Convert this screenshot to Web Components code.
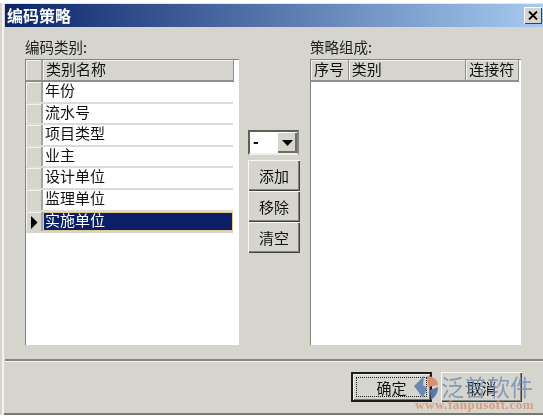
<!DOCTYPE html>
<html lang="zh"><head><meta charset="utf-8">
<style>
html,body{margin:0;padding:0;background:#fff;width:543px;height:418px;overflow:hidden}
body{font-family:"Noto Sans CJK SC","Liberation Sans",sans-serif;color:#111}
</style></head><body>
<win-dialog heading="编码策略">
  <field-panel slot="left" label="编码类别:">
    <data-grid kind="left" columns="类别名称" rows="年份,流水号,项目类型,业主,设计单位,监理单位,实施单位" current="6"></data-grid>
  </field-panel>
  <div slot="middle">
    <win-combo value="-"></win-combo>
    <win-btngroup><win-button>添加</win-button><win-button>移除</win-button><win-button>清空</win-button></win-btngroup>
  </div>
  <field-panel slot="right" label="策略组成:">
    <data-grid kind="right" columns="序号,类别,连接符" rows=""></data-grid>
  </field-panel>
  <win-button slot="footer" size="big" primary>确定</win-button>
  <win-button slot="footer" size="big">取消</win-button>
  <brand-mark slot="mark"></brand-mark>
</win-dialog>
<script>
function def(name,css,html){
  customElements.define(name,class extends HTMLElement{
    connectedCallback(){
      if(this.shadowRoot)return;
      const r=this.attachShadow({mode:'open'});
      r.innerHTML='<style>'+css+'</style>'+(typeof html==='function'?html(this):html);
    }
  });
}
def('win-dialog',`
:host{display:block;position:relative;width:543px;height:418px;box-sizing:border-box;padding:3px 0;filter:blur(.35px)}
.w{height:412px;box-sizing:border-box;background:#d6d5cd;border-left:2px solid #d6d5cd;box-shadow:inset 2px 0 0 #f3f2ee,inset 0 -2px 0 #77776f,inset 0 1px 0 #e9e8e2;padding:1px 0 2px 3px;display:flex;flex-direction:column}
.t{height:23px;flex:none;background:linear-gradient(90deg,#0a246a,#a6caf0);display:flex;align-items:center;justify-content:space-between;padding:0 1px 0 2px;color:#fff;font-weight:700;font-size:16px;line-height:23px}
.x{width:18px;height:17px;background:#d6d5cd;box-shadow:inset 1px 1px 0 #fff,inset -1px -1px 0 #404040;display:flex;align-items:center;justify-content:center}
.m{height:332px;flex:none;box-sizing:border-box;padding:10px 0 0 20px;display:flex}
.mid{width:52px;margin-left:9px;margin-right:10px;padding-top:93px;flex:none}
.f{height:0;border-top:2px solid #85857d;border-bottom:1px solid #f4f3ef;box-sizing:content-box}
.b{flex:1;position:relative;display:flex;gap:9px;padding:10px 0 0 346px}
::slotted([slot=middle]){display:block}
`,h=>`<div class="w"><div class="t"><span>${h.getAttribute('heading')}</span><span class="x"><svg width="10" height="9" viewBox="0 0 10 9"><path d="M1 0.5 L9 8.5 M9 0.5 L1 8.5" stroke="#000" stroke-width="1.8"/></svg></span></div>
<div class="m"><slot name="left"></slot><div class="mid"><slot name="middle"></slot></div><slot name="right"></slot></div>
<div class="f"></div><div class="b"><slot name="footer"></slot></div></div><slot name="mark"></slot>`);

def('field-panel',`
:host{display:block;flex:none}
.l{height:20px;line-height:20px;font-size:14.5px;color:#222;margin-bottom:2px;white-space:nowrap}
`,h=>`<div class="l">${h.getAttribute('label')}</div><slot></slot>`);

def('data-grid',`
:host{display:block;height:286px;box-sizing:border-box;background:#fff;border-left:1px solid #85857d;border-top:1px solid #85857d;font-size:15px;line-height:20px;color:#111}
:host([kind=left]){width:214px}
:host([kind=right]){width:211px}
.hd{display:flex;height:22px;box-sizing:border-box;background:#d6d5cd;border-bottom:2px solid #8f8f88;margin-right:5px}
:host([kind=right]) .hd{margin-right:2px;}
.c{box-sizing:border-box;padding-left:3px;border-right:1px solid #8f8f88;box-shadow:inset 1px 1px 0 #f3f2ee;white-space:nowrap;line-height:18px}
.ind{width:15px;flex:none;background:#d6d5cd;border-right:2px solid #a5a59d;box-shadow:inset 1px 1px 0 #f3f2ee;position:relative}
.r{display:flex;height:21.6px;box-sizing:border-box;margin-right:6px;border-bottom:2px solid #dcdbd5}
.r .v{flex:1;padding-left:2px;line-height:16px;white-space:nowrap}
.r.cur{border-bottom-color:#d6d5cd}
.r.cur .v{background:#0a1f66;color:#fff;outline:1px solid #e0c890;outline-offset:-1px}
.ind svg{position:absolute;left:5px;top:4px}
`,h=>{
  const cols=h.getAttribute('columns').split(',');
  const rows=(h.getAttribute('rows')||'').split(',').filter(Boolean);
  const cur=+h.getAttribute('current');
  if(h.getAttribute('kind')==='left'){
    return `<div class="hd"><div class="ind"></div><div class="c" style="flex:1">${cols[0]}</div></div>`+
    rows.map((t,i)=>`<div class="r${i===cur&&h.hasAttribute('current')?' cur':''}"><div class="ind">${i===cur?'<svg width="7" height="13"><path d="M0 0L6.5 6.5L0 13Z" fill="#000"/></svg>':''}</div><div class="v">${t}</div></div>`).join('');
  }
  const w=[38,118,53];
  return `<div class="hd">`+cols.map((t,i)=>`<div class="c" style="width:${w[i]}px">${t}</div>`).join('')+`</div>`;
});

def('win-combo',`
:host{display:block;width:51px;height:25px;box-sizing:border-box;background:#fff;border:2px solid;border-color:#5f5f5a #85857d #f0efea #5f5f5a;position:relative;font:700 17px/19px "Liberation Sans",sans-serif;padding-left:3px;color:#111}
.a{position:absolute;right:0;top:0;bottom:0;width:20px;background:#d6d5cd;box-shadow:inset 1px 1px 0 #fff,inset -2px -2px 0 #6f6f68;display:flex;align-items:center;justify-content:center}
`,h=>`${h.getAttribute('value')}<span class="a"><svg width="11" height="6"><path d="M0 0H11L5.5 6Z" fill="#000"/></svg></span>`);

def('win-btngroup',`
:host{display:flex;flex-direction:column;gap:0;margin-top:5px}
`,`<slot></slot>`);

def('win-button',`
:host{display:flex;align-items:center;justify-content:center;box-sizing:border-box;width:52px;height:31px;background:#d6d5cd;box-shadow:inset 1px 1px 0 #f8f7f3,inset -1px -1px 0 #404040,inset -2px -2px 0 #85857d;font-size:15px;color:#111;position:relative}
:host([size=big]){width:81px;height:30px}
:host([primary]){outline:2px solid #1c1c1c;outline-offset:-2px;box-shadow:inset 3px 3px 0 #f0efeb,inset -3px -3px 0 #77776f}
.d{display:none;position:absolute;inset:5px;border:1px dotted #222}
:host([primary]) .d{display:block}
`,`<span class="d"></span><slot></slot>`);

def('brand-mark',`
:host{position:absolute;left:413px;top:372px;width:128px;height:40px;display:block;pointer-events:none}
svg{position:absolute;left:0;top:2px}
.n{position:absolute;left:28px;top:-1px;font-size:23px;line-height:30px;color:#6f8cb4;opacity:.8;white-space:nowrap}
.u{position:absolute;left:2px;top:26px;font:700 13px/14px "Liberation Serif",serif;color:#d9967a;white-space:nowrap;letter-spacing:.55px;opacity:.9}
`,`<svg width="26" height="27" viewBox="0 0 26 27"><path d="M11 2L1 12L10 24L14 14L10 11Z" fill="#6a88b0"/><path d="M14 2C20 2 25 6 25 11L15 13Z" fill="#d98e6c"/><path d="M17 16L25 13C25 19 22 23 18 26Z" fill="#5878a6"/></svg><div class="n">泛普软件</div><div class="u">www.fanpusoft.com</div>`);
</script>
</body></html>
